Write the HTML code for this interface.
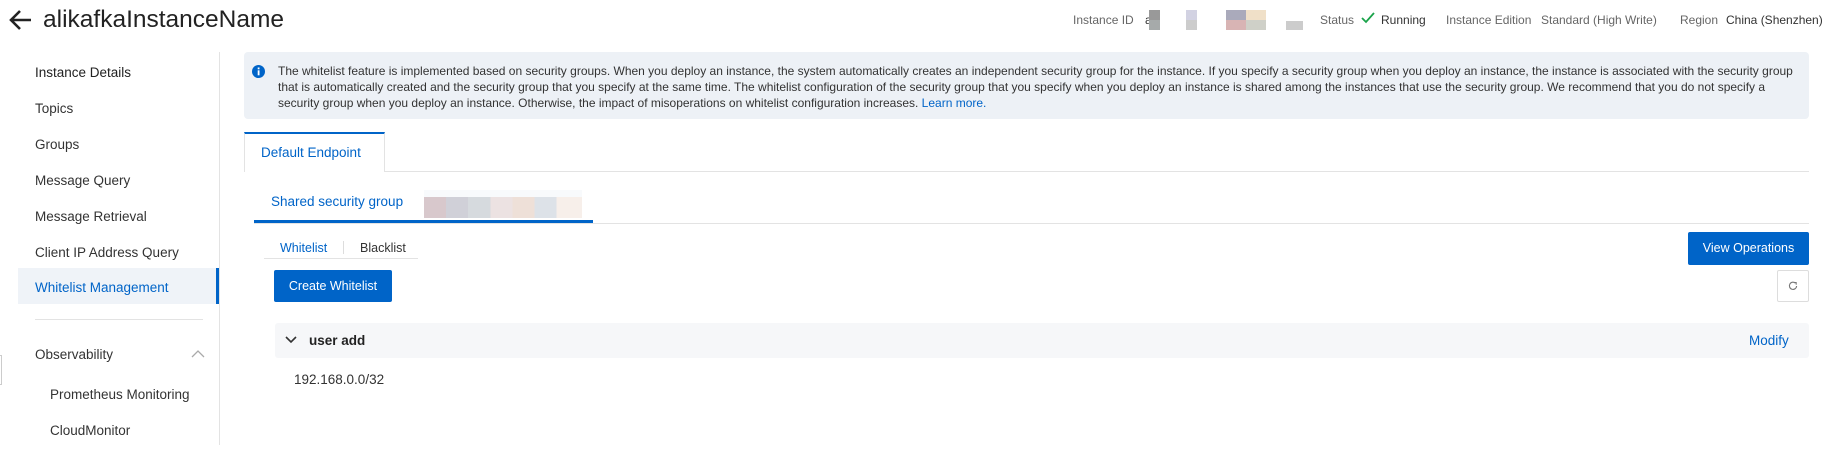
<!DOCTYPE html>
<html><head><meta charset="utf-8"><style>
*{margin:0;padding:0;box-sizing:border-box}
body{width:1837px;height:469px;background:#fff;font-family:"Liberation Sans",Arial,sans-serif;color:#333;position:relative;overflow:hidden}
.a{position:absolute;white-space:nowrap}
.s{font-size:13.5px;color:#333}
.h{font-size:12px;color:#666;top:13px}
.hv{font-size:12px;color:#333;top:13px}
.blue{color:#0064c8}
</style></head><body>
<svg class="a" style="left:9px;top:9px" width="24" height="22" viewBox="0 0 24 22"><path d="M22 11H3M11 2L2 11l9 9" stroke="#222" stroke-width="2.6" fill="none"/></svg>
<div class="a" style="left:43px;top:6px;font-size:24.5px;color:#222;">alikafkaInstanceName</div>
<div class="a h" style="left:1073px">Instance ID</div>
<div class="a hv" style="left:1145px">a</div>
<div class="a" style="left:1149px;top:10px;width:11px;height:10px;background:#999"></div>
<div class="a" style="left:1149px;top:20px;width:11px;height:10px;background:#a6aaaa"></div>
<div class="a" style="left:1186px;top:10px;width:11px;height:10px;background:#d2d2e2"></div>
<div class="a" style="left:1186px;top:20px;width:11px;height:10px;background:#ccc"></div>
<div class="a" style="left:1226px;top:10px;width:20px;height:10px;background:#aab"></div>
<div class="a" style="left:1226px;top:20px;width:20px;height:10px;background:#d8b4b4"></div>
<div class="a" style="left:1246px;top:10px;width:20px;height:10px;background:#f0e0c8"></div>
<div class="a" style="left:1246px;top:20px;width:20px;height:10px;background:#cfd0c8"></div>
<div class="a" style="left:1286px;top:21px;width:17px;height:9px;background:#ccc"></div>
<div class="a h" style="left:1320px">Status</div>
<svg class="a" style="left:1361px;top:12px" width="14" height="12" viewBox="0 0 14 12"><path d="M1 6l4 4 8-9" stroke="#1aa34a" stroke-width="1.8" fill="none"/></svg>
<div class="a hv" style="left:1381px">Running</div>
<div class="a h" style="left:1446px">Instance Edition</div>
<div class="a h" style="left:1541px">Standard (High Write)</div>
<div class="a h" style="left:1680px">Region</div>
<div class="a hv" style="left:1726px">China (Shenzhen)</div>

<div class="a" style="left:219px;top:52px;width:1px;height:393px;background:#e3e3e3"></div>
<div class="a s" style="left:35px;top:65px;color:#222">Instance Details</div>
<div class="a s" style="left:35px;top:101px">Topics</div>
<div class="a s" style="left:35px;top:137px">Groups</div>
<div class="a s" style="left:35px;top:173px">Message Query</div>
<div class="a s" style="left:35px;top:209px">Message Retrieval</div>
<div class="a s" style="left:35px;top:245px">Client IP Address Query</div>
<div class="a" style="left:18px;top:268px;width:201px;height:36px;background:#eff3f8;border-right:3px solid #0064c8"></div>
<div class="a s blue" style="left:35px;top:280px;color:#0064c8">Whitelist Management</div>
<div class="a" style="left:35px;top:319px;width:168px;height:1px;background:#e3e3e3"></div>
<div class="a s" style="left:35px;top:347px">Observability</div>
<svg class="a" style="left:191px;top:349px" width="14" height="9" viewBox="0 0 14 9"><path d="M1 8l6-6 6 6" stroke="#aaa" stroke-width="1.3" fill="none"/></svg>
<div class="a" style="left:0;top:355px;width:2px;height:30px;border:1px solid #ccc;border-left:none"></div>
<div class="a s" style="left:50px;top:387px">Prometheus Monitoring</div>
<div class="a s" style="left:50px;top:423px">CloudMonitor</div>

<div class="a" style="left:244px;top:52px;width:1565px;height:67px;background:#edf1f6;border-radius:4px"></div>
<svg class="a" style="left:252px;top:65px" width="13" height="13" viewBox="0 0 13 13"><circle cx="6.5" cy="6.5" r="6.5" fill="#0064c8"/><rect x="5.7" y="5.3" width="1.8" height="5" fill="#fff"/><rect x="5.7" y="2.5" width="1.8" height="1.8" fill="#fff"/></svg>
<div class="a" style="left:278px;top:63px;font-size:12px;line-height:16px;color:#333">The whitelist feature is implemented based on security groups. When you deploy an instance, the system automatically creates an independent security group for the instance. If you specify a security group when you deploy an instance, the instance is associated with the security group<br>that is automatically created and the security group that you specify at the same time. The whitelist configuration of the security group that you specify when you deploy an instance is shared among the instances that use the security group. We recommend that you do not specify a<br>security group when you deploy an instance. Otherwise, the impact of misoperations on whitelist configuration increases. <span class="blue">Learn more.</span></div>

<div class="a" style="left:244px;top:171px;width:1565px;height:1px;background:#e3e3e3"></div>
<div class="a" style="left:244px;top:132px;width:141px;height:40px;background:#fff;border-top:2px solid #0064c8;border-right:1px solid #e3e3e3;border-left:1px solid #e3e3e3"></div>
<div class="a blue" style="left:261px;top:145px;font-size:13.5px">Default Endpoint</div>

<div class="a" style="left:254px;top:223px;width:1555px;height:1px;background:#e3e3e3"></div>
<div class="a" style="left:254px;top:220px;width:339px;height:3px;background:#0064c8"></div>
<div class="a blue" style="left:271px;top:194px;font-size:13.5px">Shared security group</div>
<div class="a" style="left:424px;top:190px;width:158px;height:7px;background:#f8fafc"></div>
<div class="a" style="left:424px;top:197px;width:158px;height:21px;background:linear-gradient(90deg,#d8c8cc 0 14%,#d0d0d8 14% 28%,#d6dade 28% 42%,#ece2e2 42% 56%,#eee0d8 56% 70%,#dde2e8 70% 84%,#f7efea 84%)"></div>

<div class="a" style="left:264px;top:258px;width:154px;height:1px;background:#e3e3e3"></div>
<div class="a blue" style="left:280px;top:241px;font-size:12.5px">Whitelist</div>
<div class="a" style="left:343px;top:241px;width:1px;height:13px;background:#ddd"></div>
<div class="a" style="left:360px;top:241px;font-size:12.5px;color:#333">Blacklist</div>

<div class="a" style="left:1688px;top:232px;width:121px;height:33px;background:#0064c8;border-radius:2px;color:#fff;font-size:12.5px;text-align:center;line-height:33px">View Operations</div>
<div class="a" style="left:274px;top:270px;width:118px;height:32px;background:#0064c8;border-radius:2px;color:#fff;font-size:12.5px;text-align:center;line-height:32px">Create Whitelist</div>
<div class="a" style="left:1777px;top:270px;width:32px;height:32px;border:1px solid #ddd;border-radius:2px;background:#fff"></div>
<svg class="a" style="left:1788px;top:281px" width="10" height="10" viewBox="0 0 10 10"><path d="M7.5 2.2A3.6 3.6 0 1 0 8.6 5" stroke="#777" stroke-width="1.1" fill="none"/><path d="M6 1.5h2.2v2.2" stroke="#777" stroke-width="1" fill="none"/></svg>

<div class="a" style="left:275px;top:323px;width:1534px;height:35px;background:#f6f7f9;border-radius:3px"></div>
<svg class="a" style="left:285px;top:336px" width="12" height="8" viewBox="0 0 12 8"><path d="M1 1l5 5 5-5" stroke="#333" stroke-width="1.6" fill="none"/></svg>
<div class="a" style="left:309px;top:333px;font-size:13.5px;color:#222;font-weight:bold;">user add</div>
<div class="a blue" style="left:1749px;top:333px;font-size:13.5px">Modify</div>
<div class="a s" style="left:294px;top:372px">192.168.0.0/32</div>
</body></html>
